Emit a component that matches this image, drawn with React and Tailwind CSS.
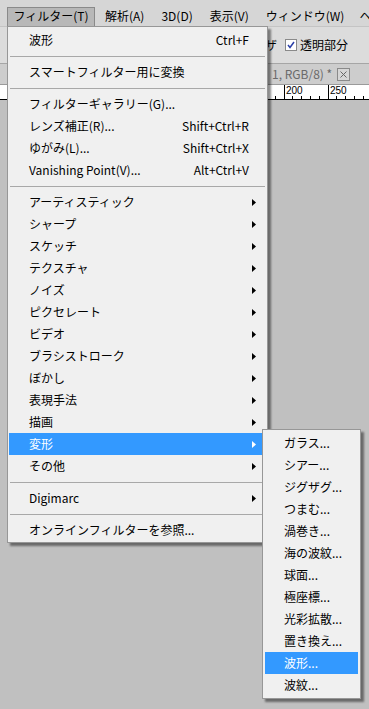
const jp = { fontFamily: '"Noto Sans CJK JP", "Noto Sans", sans-serif' };

function Arrow({ white }) {
    return (
        <svg width="4" height="7" viewBox="0 0 4 7" className="absolute right-[10px] top-[8px]">
            <path d="M0 0 L4 3.5 L0 7 Z" fill={white ? '#ffffff' : '#000000'} />
        </svg>
    );
}

function Item({ label, shortcut, sub, active }) {
    return (
        <div
            className={`relative flex items-center h-[22px] mx-[1px] pl-[20px] pr-[17px] text-[12px] ${active ? 'bg-[#3399ff] text-white' : 'text-black'}`}
        >
            <span className="flex-1 whitespace-nowrap">{label}</span>
            {shortcut && <span className="whitespace-nowrap">{shortcut}</span>}
            {sub && <Arrow white={active} />}
        </div>
    );
}

function Sep() {
    return (
        <div className="h-[10px] flex items-center px-[2px]">
            <div className="h-px w-full bg-[#a8a8a8]" />
        </div>
    );
}

function SubItem({ label, active }) {
    return (
        <div className={`flex items-center h-[22px] mx-[2px] pl-[19px] text-[12px] whitespace-nowrap ${active ? 'bg-[#3399ff] text-white' : 'text-black'}`}>
            {label}
        </div>
    );
}

function Ruler() {
    const ticks = [];
    for (let i = 0; i < 60; i++) {
        const x = 284 - 44 * 6 + i * 8.8;
        const major = i % 5 === 0;
        ticks.push(
            <line key={i} x1={x} x2={x} y1={major ? 0 : 11} y2={15} stroke="#000" strokeWidth="1" shapeRendering="crispEdges" />
        );
    }
    return (
        <svg width="369" height="15" className="block">
            {ticks}
            <line x1="0" x2="369" y1="14.5" y2="14.5" stroke="#000" />
        </svg>
    );
}

export default function App() {
    const subs = ['アーティスティック', 'シャープ', 'スケッチ', 'テクスチャ', 'ノイズ', 'ピクセレート', 'ビデオ', 'ブラシストローク', 'ぼかし', '表現手法', '描画'];
    const distort = ['ガラス...', 'シアー...', 'ジグザグ...', 'つまむ...', '渦巻き...', '海の波紋...', '球面...', '極座標...', '光彩拡散...', '置き換え...', '波形...', '波紋...'];

    return (
        <div className="relative w-[369px] h-[709px] overflow-hidden bg-[#c0c0c0]" style={jp}>
            {/* menubar */}
            <div className="h-[26px] bg-[#d6d6d6] flex items-end text-[12px] text-black whitespace-nowrap overflow-hidden">
                <div className="shrink-0 ml-[7px] w-[88px] h-[19px] bg-[#b8b8b8] border border-b-0 border-[#8a8a8a] flex items-center justify-center pb-[2px]">
                    フィルター(T)
                </div>
                <div className="shrink-0 ml-[10px] h-[19px] pb-[2px] flex items-center">解析(A)</div>
                <div className="shrink-0 ml-[17px] h-[19px] pb-[2px] flex items-center">3D(D)</div>
                <div className="shrink-0 ml-[17px] h-[19px] pb-[2px] flex items-center">表示(V)</div>
                <div className="shrink-0 ml-[17px] h-[19px] pb-[2px] flex items-center">ウィンドウ(W)</div>
                <div className="shrink-0 ml-[15px] h-[19px] pb-[2px] flex items-center">ヘ</div>
            </div>

            {/* options bar */}
            <div className="h-[38px] bg-[#dcdcdc] border-t border-[#c4c4c4] border-b border-b-[#a6a6a6] flex items-center text-[12px] text-black">
                <div className="ml-[265px]">ザ</div>
                <div className="ml-[8px] w-[12px] h-[12px] border border-[#8a8a8a] bg-white flex items-center justify-center">
                    <svg width="8" height="8" viewBox="0 0 8 8">
                        <path d="M1 4 L3 6.5 L7 1" stroke="#2a3fa8" strokeWidth="1.5" fill="none" />
                    </svg>
                </div>
                <div className="ml-[3px]">透明部分</div>
            </div>

            {/* tab bar */}
            <div className="h-[21px] bg-[#cdcdcd] border-b border-[#9a9a9a] flex items-center text-[12px] text-[#6a6a6a]">
                <div className="ml-[272px] whitespace-nowrap">1, RGB/8) *</div>
                <div className="ml-[5px] w-[13px] h-[13px] border border-[#8a8a8a] bg-[#d6d6d6] flex items-center justify-center">
                    <svg width="7" height="7" viewBox="0 0 7 7">
                        <path d="M0.5 0.5 L6.5 6.5 M6.5 0.5 L0.5 6.5" stroke="#666" strokeWidth="1" />
                    </svg>
                </div>
            </div>

            {/* ruler */}
            <div className="relative h-[15px] bg-white">
                <Ruler />
                <span className="absolute left-[286px] top-0 text-[10px] leading-[12px] text-black" style={{ fontFamily: '"Liberation Sans", sans-serif' }}>200</span>
                <span className="absolute left-[330px] top-0 text-[10px] leading-[12px] text-black" style={{ fontFamily: '"Liberation Sans", sans-serif' }}>250</span>
            </div>

            {/* filter menu */}
            <div className="absolute left-[7px] top-[26px] w-[261px] bg-[#f0f0f0] border border-[#979797] pt-[2px] pb-[1px] shadow-[3px_3px_2px_rgba(0,0,0,0.45)]">
                <Item label="波形" shortcut="Ctrl+F" />
                <Sep />
                <Item label="スマートフィルター用に変換" />
                <Sep />
                <Item label="フィルターギャラリー(G)..." />
                <Item label="レンズ補正(R)..." shortcut="Shift+Ctrl+R" />
                <Item label="ゆがみ(L)..." shortcut="Shift+Ctrl+X" />
                <Item label="Vanishing Point(V)..." shortcut="Alt+Ctrl+V" />
                <Sep />
                {subs.map((s) => (
                    <Item key={s} label={s} sub />
                ))}
                <Item label="変形" sub active />
                <Item label="その他" sub />
                <Sep />
                <Item label="Digimarc" sub />
                <Sep />
                <Item label="オンラインフィルターを参照..." />
            </div>

            {/* distort submenu */}
            <div className="absolute left-[262px] top-[429px] w-[99px] bg-[#f0f0f0] border border-[#979797] py-[2px] shadow-[3px_3px_2px_rgba(0,0,0,0.45)]">
                {distort.map((d, i) => (
                    <SubItem key={d} label={d} active={i === 10} />
                ))}
            </div>
        </div>
    );
}
